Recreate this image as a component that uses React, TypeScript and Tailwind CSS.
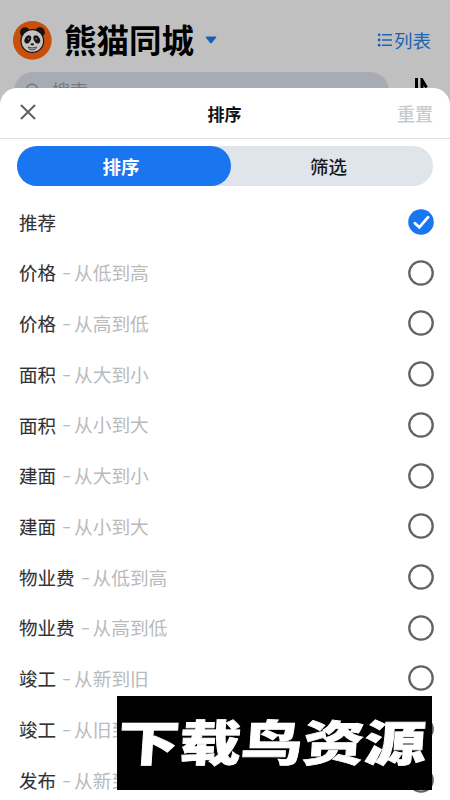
import { useState } from "react";
import clsx from "clsx";

const options = [
  { label: "推荐", hint: "" },
  { label: "价格", hint: "从低到高" },
  { label: "价格", hint: "从高到低" },
  { label: "面积", hint: "从大到小" },
  { label: "面积", hint: "从小到大" },
  { label: "建面", hint: "从大到小" },
  { label: "建面", hint: "从小到大" },
  { label: "物业费", hint: "从低到高" },
  { label: "物业费", hint: "从高到低" },
  { label: "竣工", hint: "从新到旧" },
  { label: "竣工", hint: "从旧到新" },
  { label: "发布", hint: "从新到旧" },
];

function PandaLogo() {
  return (
    <svg viewBox="0 0 40 40" className="h-[40px] w-[40px] shrink-0">
      <circle cx="20.3" cy="20.3" r="19.4" fill="#c9500c" />
      <circle cx="13" cy="12.2" r="5" fill="#1b1110" />
      <circle cx="27.8" cy="12.2" r="5" fill="#1b1110" />
      <ellipse cx="20.3" cy="21" rx="11.9" ry="12" fill="#1b1110" />
      <ellipse cx="20.3" cy="21" rx="10.7" ry="10.8" fill="#c4c4c4" />
      <ellipse cx="15.8" cy="19.4" rx="3" ry="4.3" transform="rotate(28 15.8 19.4)" fill="#1b1110" />
      <ellipse cx="24.8" cy="19.4" rx="3" ry="4.3" transform="rotate(-28 24.8 19.4)" fill="#1b1110" />
      <circle cx="16.4" cy="18.8" r="0.8" fill="#999" />
      <circle cx="24.2" cy="18.8" r="0.8" fill="#999" />
      <ellipse cx="20.3" cy="24.3" rx="1.8" ry="1.1" fill="#1b1110" />
      <path d="M16 27Q20.3 28.8 24.6 27Q23.8 30 20.3 30Q16.8 30 16 27Z" fill="#aaa" stroke="#333" strokeWidth="0.8" />
    </svg>
  );
}

function Radio({ checked }: { checked: boolean }) {
  return (
    <svg viewBox="0 0 26 26" className="h-[26px] w-[26px] shrink-0" fill="none">
      {checked ? (
        <>
          <circle cx="13" cy="13" r="12.8" fill="#1877f0" />
          <path d="M6.9 14.2L11.3 18.3L20.1 8.2" stroke="#fff" strokeWidth="2.8" strokeLinecap="round" />
        </>
      ) : (
        <circle cx="13" cy="13" r="11.7" stroke="#626366" strokeWidth="2.3" />
      )}
    </svg>
  );
}

function Header() {
  return (
    <div className="h-[88px]">
      <div className="flex h-[72px] items-center pt-[8px] pr-[19px] pl-[12px]">
        <PandaLogo />
        <h1 className="ml-[12px] pb-[2px] text-[32.5px] leading-none font-bold text-black">熊猫同城</h1>
        <svg viewBox="0 0 12 8" className="ml-[11px] h-[8px] w-[12px]">
          <path d="M1.5 0.5H10.5Q12 0.5 11 1.8L7 6.7Q6 7.8 5 6.7L1 1.8Q0 0.5 1.5 0.5Z" fill="#185fb8" />
        </svg>
        <div className="ml-auto flex items-center text-[18.5px] leading-none text-[#2062b4]">
          <svg viewBox="0 0 16 14" className="mr-[1px] h-[14px] w-[16px]" fill="currentColor">
            <circle cx="2.2" cy="1.8" r="1.4" />
            <circle cx="2.2" cy="7" r="1.4" />
            <circle cx="2.2" cy="12.2" r="1.4" />
            <path d="M5 1.1H15V2.5H5ZM5 6.3H15V7.7H5ZM5 11.5H15V12.9H5Z" />
          </svg>
          列表
        </div>
      </div>
      <div className="flex h-[18px] items-start pl-[14px]">
        <div className="flex h-[38px] w-[375px] shrink-0 rounded-full bg-[#a8abb4] pt-[9px] pl-[11px] text-[18px] leading-none text-[#777a81]">
          <svg viewBox="0 0 18 18" className="mt-[2px] mr-[9px] h-[18px] w-[18px]" fill="none" stroke="#73767d" strokeWidth="1.5">
            <circle cx="7" cy="7" r="5.7" />
            <path d="M11.2 11.2L16 16" />
          </svg>
          搜索
        </div>
        <svg viewBox="0 0 14 20" className="mt-[6px] ml-[25px] h-[20px] w-[14px]" fill="none" stroke="#000" strokeWidth="3">
          <path d="M2.5 0V20M8 20V2L12.5 9.5" />
        </svg>
      </div>
    </div>
  );
}

export default function App() {
  const [tab, setTab] = useState("排序");
  const [selected, setSelected] = useState(0);

  return (
    <div className="relative h-[800px] w-[450px] overflow-hidden bg-[#c0c0c0] font-['Noto_Sans_CJK_SC',sans-serif]">
      <Header />

      {/* Sort sheet */}
      <div className="relative h-[712px] rounded-t-[17px] bg-white">
        <div className="grid h-[51px] grid-cols-3 items-center border-b border-[#dedfe1] pr-[17px] pl-[20px] leading-none">
          <button aria-label="关闭" className="mb-[2px] w-fit">
            <svg viewBox="0 0 16 16" className="h-[16px] w-[16px]" fill="none" stroke="#606165" strokeWidth="2">
              <path d="M1 1L15 15M15 1L1 15" />
            </svg>
          </button>
          <h2 className="pr-[4px] text-center text-[17px] font-bold text-[#111]">排序</h2>
          <button className="text-right text-[18px] font-medium text-[#c8cacd]">重置</button>
        </div>

        <div className="mx-[17px] mt-[7px] flex h-[40px] rounded-full bg-[#e0e4eb]">
          {["排序", "筛选"].map((name) => (
            <button
              key={name}
              onClick={() => setTab(name)}
              className={clsx(
                "rounded-full text-[18.5px] leading-none",
                tab === name ? "w-[214px] pr-[6px] bg-[#1976f0] font-bold text-white" : "flex-1 pr-[7px] font-medium text-[#17181a]"
              )}
            >
              {name}
            </button>
          ))}
        </div>

        <ul className="mt-[10.6px]">
          {options.map((item, i) => (
            <li
              key={i}
              onClick={() => setSelected(i)}
              className="flex h-[50.72px] items-center pr-[16px] pl-[19px] text-[18.5px] leading-none"
            >
              <span className="text-[#303134] [-webkit-text-stroke:0.1px_#303134]">{item.label}</span>
              {item.hint && (
                <span className="ml-[6px] flex text-[#b9babc]">
                  <span className="mt-[-1px] w-[12px] origin-left scale-x-140">-</span>
                  <span className="text-[18.7px]">{item.hint}</span>
                </span>
              )}
              <span className="ml-auto">
                <Radio checked={selected === i} />
              </span>
            </li>
          ))}
        </ul>
      </div>

      {/* Site banner */}
      <div className="absolute top-[696px] left-[117px] flex h-[94px] w-[315px] items-center justify-center bg-black pr-[4px] pb-[6px]">
        <span className="scale-x-[1.27] -skew-x-3 text-[48.5px] leading-none font-black whitespace-nowrap text-white [-webkit-text-stroke:0.8px_white]">
          下载鸟资源
        </span>
      </div>
    </div>
  );
}
